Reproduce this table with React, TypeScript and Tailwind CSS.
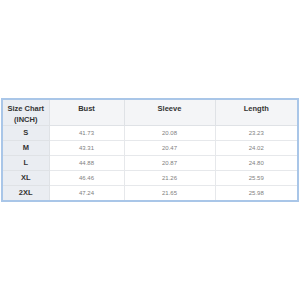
const ROWS: [string, string, string, string][] = [
  ["S", "41.73", "20.08", "23.23"],
  ["M", "43.31", "20.47", "24.02"],
  ["L", "44.88", "20.87", "24.80"],
  ["XL", "46.46", "21.26", "25.59"],
  ["2XL", "47.24", "21.65", "25.98"],
];

export default function App() {
  return (
    <div className="w-[300px] h-[300px] bg-white pt-[98px] pl-px font-['Liberation_Sans',Arial,sans-serif]">
      <table className="border-collapse border-2 border-[#a9c6e8] table-fixed w-[298px]">
        <colgroup>
          <col className="w-[47px]" />
          <col className="w-[75px]" />
          <col className="w-[91px]" />
          <col />
        </colgroup>
        <thead>
          <tr className="h-[26px] bg-[#f4f5f7]">
            <th className="border border-[#dfe2e6] align-top pt-[3px] text-[7.5px] leading-[11px] font-bold text-[#333] bg-[#eaedf2]">
              Size Chart
              <br />
              (INCH)
            </th>
            <th className="border border-[#dfe2e6] align-top pt-[3px] text-[7.5px] leading-[11px] font-bold text-[#333]">Bust</th>
            <th className="border border-[#dfe2e6] align-top pt-[3px] text-[7.5px] leading-[11px] font-bold text-[#333]">Sleeve</th>
            <th className="border border-[#dfe2e6] align-top pt-[3px] text-[7.5px] leading-[11px] font-bold text-[#333]">Length</th>
          </tr>
        </thead>
        <tbody>
          {ROWS.map(([size, bust, sleeve, length]) => (
            <tr key={size} className="h-[15px]">
              <td className="border border-[#dfe2e6] bg-[#eaedf2] p-0 text-center text-[7.5px] leading-[14px] font-bold text-[#333]">{size}</td>
              <td className="border border-[#e6e8eb] p-0 text-center text-[6px] leading-[14px] text-[#808080]">{bust}</td>
              <td className="border border-[#e6e8eb] p-0 text-center text-[6px] leading-[14px] text-[#808080]">{sleeve}</td>
              <td className="border border-[#e6e8eb] p-0 text-center text-[6px] leading-[14px] text-[#808080]">{length}</td>
            </tr>
          ))}
        </tbody>
      </table>
    </div>
  );
}
